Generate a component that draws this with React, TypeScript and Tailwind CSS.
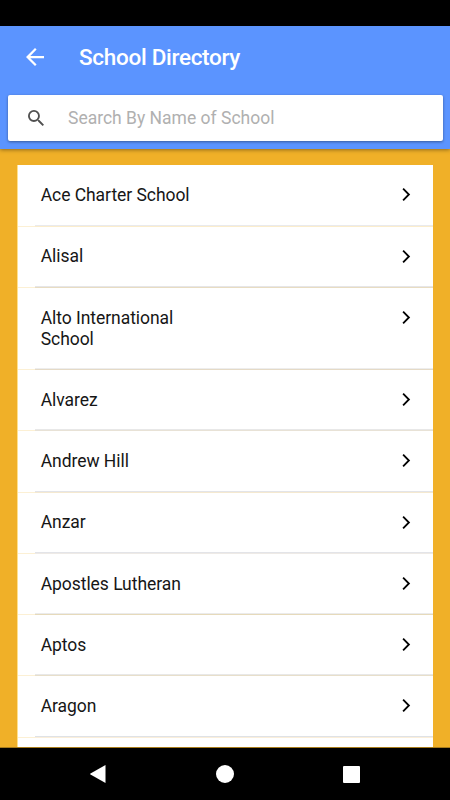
import React from "react";

type School = { name: string; height: string; pad: string; line: string; edge: string };

const schools: School[] = [
  { name: "Ace Charter School", height: "h-[62px]", pad: "mt-[20px]", line: "bg-[#e9eaed]", edge: "bg-[#fbedcd]" },
  { name: "Alisal", height: "h-[61px]", pad: "mt-[19px]", line: "bg-[#e6e6e8]", edge: "bg-[#e8dcc2]" },
  { name: "Alto International School", height: "h-[82px]", pad: "mt-[20px]", line: "bg-[#ededed]", edge: "bg-[#e5dac6]" },
  { name: "Alvarez", height: "h-[61px]", pad: "mt-[20px]", line: "bg-[#e8e8e8]", edge: "bg-[#e8e2d6]" },
  { name: "Andrew Hill", height: "h-[62px]", pad: "mt-[20px]", line: "bg-[#e3e4e8]", edge: "bg-[#f5e9d0]" },
  { name: "Anzar", height: "h-[61px]", pad: "mt-[19px]", line: "bg-[#e3e4e8]", edge: "bg-[#eeeae6]" },
  { name: "Apostles Lutheran", height: "h-[61px]", pad: "mt-[20px]", line: "bg-[#ebebeb]", edge: "bg-[#e6dabb]" },
  { name: "Aptos", height: "h-[61px]", pad: "mt-[20px]", line: "bg-[#e8e8e8]", edge: "bg-[#e8dfca]" },
  { name: "Aragon", height: "h-[62px]", pad: "mt-[20px]", line: "bg-[#dfe2e6]", edge: "bg-[#faeeda]" },
];

function Row({ name, height, pad, line, edge }: School) {
  return (
    <li className={`flex shrink-0 flex-col bg-white ${height}`}>
      <div className="flex flex-1 items-start justify-between pl-[22.7px] pr-[22px]">
        <span className={`w-[175px] text-[17.5px] leading-[21px] tracking-[-0.05px] text-[#161616] ${pad}`}>{name}</span>
        <svg className="mt-[22px] h-[15px] w-[10px]" viewBox="0 0 10 15" fill="none" stroke="#000" strokeWidth="1.8">
          <path d="M2.1 1.7 7.9 7.5 2.1 13.3" />
        </svg>
      </div>
      <div className={`ml-[17px] h-px ${line}`} />
      <div className="flex h-px">
        <div className="w-[17px] bg-[#fcf0d4]" />
        <div className={`flex-1 ${edge}`} />
      </div>
    </li>
  );
}

export default function App() {
  return (
    <div className="flex h-[800px] w-[450px] flex-col overflow-hidden bg-black font-[Roboto,sans-serif]">
      <div className="h-[26px] shrink-0 bg-black" />
      <header className="z-10 h-[123px] shrink-0 bg-[#5b94ff] shadow-[0_1px_4px_rgba(0,0,0,0.4)]">
        <div className="flex h-[62px] items-center pl-[26px]">
          <svg className="h-[18px] w-[18px]" viewBox="4 4 16 16" fill="#fff">
            <path d="M20 11H7.83l5.59-5.59L12 4l-8 8 8 8 1.41-1.41L7.83 13H20v-2z" />
          </svg>
          <h1 className="ml-[35px] text-[22.5px] font-medium leading-[26px] tracking-[-0.3px] text-white">School Directory</h1>
        </div>
        <div className="ml-[8px] mr-[7px] mt-[7px] flex h-[46px] items-center rounded-[2px] bg-white pl-[20px] shadow-[0_1px_3px_rgba(0,0,0,0.4)]">
          <svg className="h-[16px] w-[16px]" viewBox="3 3 17.5 17.5" fill="#505050">
            <path d="M15.5 14h-.79l-.28-.27A6.471 6.471 0 0 0 16 9.5 6.5 6.5 0 1 0 9.5 16c1.61 0 3.09-.59 4.23-1.57l.27.28v.79l5 4.99L20.49 19l-4.99-5zm-6 0C7.01 14 5 11.99 5 9.5S7.01 5 9.5 5 14 7.01 14 9.5 11.99 14 9.5 14z" />
          </svg>
          <span className="ml-[24px] text-[17.5px] leading-[22px] text-[#b0b0b0]">Search By Name of School</span>
        </div>
      </header>
      <main className="h-[599px] shrink-0 overflow-hidden border-b border-black/30 bg-[#f0b028] bg-clip-border pl-[17px] pr-[17px] pt-[16px]">
        <ul className="flex flex-col border-l border-[#ffe18e]">
          {schools.map((school) => (
            <Row key={school.name} {...school} />
          ))}
          <li className="h-[20px] bg-white" />
        </ul>
      </main>
      <nav className="flex flex-1 items-center bg-black pl-[90px]">
        <svg className="h-[18px] w-[16px]" viewBox="0 0 16 18" fill="#fff">
          <path d="M15.5 0v18L.5 9.6q-.9-.6 0-1.2z" />
        </svg>
        <div className="ml-[110px] h-[18px] w-[18px] rounded-full bg-white" />
        <div className="ml-[109px] h-[17px] w-[17px] rounded-[1px] bg-white" />
      </nav>
    </div>
  );
}
